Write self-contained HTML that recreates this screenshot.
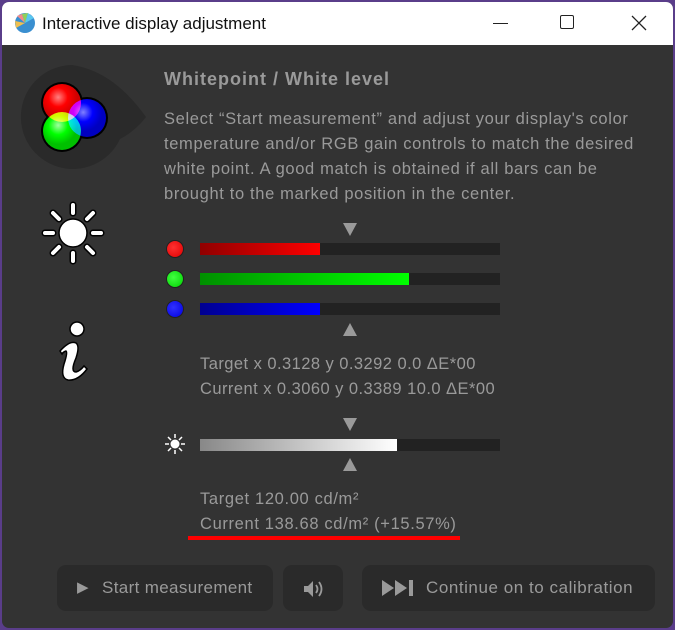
<!DOCTYPE html>
<html><head><meta charset="utf-8"><style>
*{margin:0;padding:0;box-sizing:border-box}
body{width:675px;height:630px;background:#5a3d8a;position:relative;overflow:hidden;font-family:"Liberation Sans",sans-serif}
.win{position:absolute;left:2px;top:2px;width:671px;height:626px;background:#333;border-radius:7px;overflow:hidden}
.tb{position:absolute;left:0;top:0;width:100%;height:43px;background:#fff}
.tb .t{position:absolute;left:40px;top:12px;font-size:17px;color:#111}
.txt{position:absolute;color:#9a9a9a;font-size:16.5px;white-space:nowrap;letter-spacing:.6px}
.bar{position:absolute;left:200px;width:300px;height:12px;background:#222}
.bar div{height:12px}
.dot{position:absolute;left:166px;width:18px;height:18px;border-radius:50%;border:1px solid #222}
.tri{position:absolute;width:0;height:0;border-left:7px solid transparent;border-right:7px solid transparent}
.dn{border-top:13px solid #9a9a9a}
.up{border-bottom:13px solid #9a9a9a}
.btn{position:absolute;top:565px;height:46px;background:#2a2a2a;border-radius:9px;color:#9a9a9a;font-size:17px;line-height:46px}
</style></head><body>
<div class="win">
<div class="tb">
<svg style="position:absolute;left:12px;top:10px" width="22" height="22"><circle cx="11" cy="11" r="10" fill="#3a8fd0"/><path d="M11 11 L3 4 L8 2Z" fill="#f28a8a"/><path d="M11 11 L8 2 L14 1Z" fill="#8fd05a"/><path d="M11 11 L14 1 L20 6Z" fill="#5ac8f0"/><path d="M11 11 L2 16 L1 9Z" fill="#f0c050"/></svg>
<div class="t">Interactive display adjustment</div>
<div style="position:absolute;left:491px;top:21px;width:15px;height:1px;background:#222"></div>
<div style="position:absolute;left:558px;top:13px;width:14px;height:14px;border:1.5px solid #222;border-radius:2px"></div>
<svg style="position:absolute;left:629px;top:13px" width="16" height="16"><path d="M1 1L15 15M15 1L1 15" stroke="#222" stroke-width="1.3"/></svg>
</div>
</div>
<svg style="position:absolute;left:0;top:0" width="160" height="400">
<path d="M146 117 C128 92 105 70 72 65 A52 52 0 1 0 120 139 C130 134 139 126 146 117Z" fill="#2a2a2a"/>
<defs><radialGradient id="r" cx="40%" cy="35%"><stop offset="0" stop-color="#ff8080"/><stop offset=".5" stop-color="#ff0000"/><stop offset="1" stop-color="#d00000"/></radialGradient>
<radialGradient id="g" cx="40%" cy="35%"><stop offset="0" stop-color="#a0ffa0"/><stop offset=".5" stop-color="#00ff00"/><stop offset="1" stop-color="#00c000"/></radialGradient>
<radialGradient id="b" cx="40%" cy="35%"><stop offset="0" stop-color="#8080ff"/><stop offset=".5" stop-color="#0000ff"/><stop offset="1" stop-color="#0000c0"/></radialGradient></defs>
<g fill="#000"><circle cx="87" cy="118" r="21"/><circle cx="62" cy="103" r="21"/><circle cx="62" cy="131" r="21"/></g>
<g style="isolation:isolate">
<circle cx="87" cy="118" r="19" fill="url(#b)" style="mix-blend-mode:screen"/>
<circle cx="62" cy="103" r="19" fill="url(#r)" style="mix-blend-mode:screen"/>
<circle cx="62" cy="131" r="19" fill="url(#g)" style="mix-blend-mode:screen"/>
</g>
<g stroke="#000" stroke-width="7" stroke-linecap="round"><path d="M73 205v8M73 253v8M45 233h8M93 233h8M53 213l6 6M87 247l6 6M53 253l6-6M87 219l6-6"/></g>
<g stroke="#fff" stroke-width="4" stroke-linecap="round"><path d="M73 205v8M73 253v8M45 233h8M93 233h8M53 213l6 6M87 247l6 6M53 253l6-6M87 219l6-6"/></g>
<circle cx="73" cy="233" r="14" fill="#fff" stroke="#000" stroke-width="1.5"/>
<circle cx="77" cy="329" r="7" fill="#fff" stroke="#000" stroke-width="1.5"/>
<path d="M60 351 Q70 340 76 343 Q80 346 76 358 Q70 372 76 372 Q80 371 84 366 L87 369 Q78 381 68 380 Q60 378 64 364 Q68 352 66 351 Q63 352 62 354Z" fill="#fff" stroke="#000" stroke-width="1.5"/>
</svg>
<div class="txt" style="left:164px;top:69px;font-size:18px;font-weight:bold;letter-spacing:1px">Whitepoint / White level</div>
<div class="txt" style="left:164px;top:107px;line-height:25px;letter-spacing:.65px">Select “Start measurement” and adjust your display's color<br>temperature and/or RGB gain controls to match the desired<br>white point. A good match is obtained if all bars can be<br>brought to the marked position in the center.</div>
<div class="tri dn" style="left:343px;top:223px"></div>
<div class="dot" style="top:240px;background:radial-gradient(circle at 40% 40%,#ff3030,#e00000)"></div>
<div class="bar" style="top:243px"><div style="width:120px;background:linear-gradient(90deg,#900000,#ff0000)"></div></div>
<div class="dot" style="top:270px;background:radial-gradient(circle at 40% 40%,#40ff40,#00d000)"></div>
<div class="bar" style="top:273px"><div style="width:209px;background:linear-gradient(90deg,#009000,#00ff00)"></div></div>
<div class="dot" style="top:300px;background:radial-gradient(circle at 40% 40%,#3030ff,#0000e0)"></div>
<div class="bar" style="top:303px"><div style="width:120px;background:linear-gradient(90deg,#000090,#0000ff)"></div></div>
<div class="tri up" style="left:343px;top:323px"></div>
<div class="txt" style="left:200px;top:352px;line-height:25px;letter-spacing:.45px">Target x 0.3128 y 0.3292 0.0 ΔE*00<br>Current x 0.3060 y 0.3389 10.0 ΔE*00</div>
<div class="tri dn" style="left:343px;top:418px"></div>
<svg style="position:absolute;left:164px;top:433px" width="22" height="22"><g stroke="#fff" stroke-width="1.5"><path d="M11 1v4M11 17v4M1 11h4M17 11h4M4 4l3 3M15 15l3 3M4 18l3-3M15 7l3-3"/></g><circle cx="11" cy="11" r="4.5" fill="#fff"/></svg>
<div class="bar" style="top:439px"><div style="width:197px;background:linear-gradient(90deg,#888,#fff)"></div></div>
<div class="tri up" style="left:343px;top:458px"></div>
<div class="txt" style="left:200px;top:487px;line-height:25px;letter-spacing:.65px">Target 120.00 cd/m²<br>Current 138.68 cd/m² (+15.57%)</div>
<div style="position:absolute;left:188px;top:536px;width:272px;height:4px;background:#f00"></div>
<div class="btn" style="left:57px;width:216px"><span style="position:absolute;left:20px;font-size:15px">▶</span><span style="position:absolute;left:45px;letter-spacing:.35px">Start measurement</span></div>
<div class="btn" style="left:283px;width:60px"><svg style="position:absolute;left:19px;top:14px" width="24" height="20"><path d="M2 7h4l5-5v16l-5-5H2z" fill="#9a9a9a"/><path d="M14 6q3 4 0 8M17 3q5 7 0 14" stroke="#9a9a9a" stroke-width="1.8" fill="none"/></svg></div>
<div class="btn" style="left:362px;width:293px"><svg style="position:absolute;left:20px;top:15px" width="36" height="16"><path d="M0 0l12 8-12 8zM13 0l12 8-12 8z" fill="#9a9a9a"/><rect x="27" y="0" width="4" height="16" fill="#9a9a9a"/></svg><span style="position:absolute;left:64px;letter-spacing:.55px">Continue on to calibration</span></div>
</body></html>
